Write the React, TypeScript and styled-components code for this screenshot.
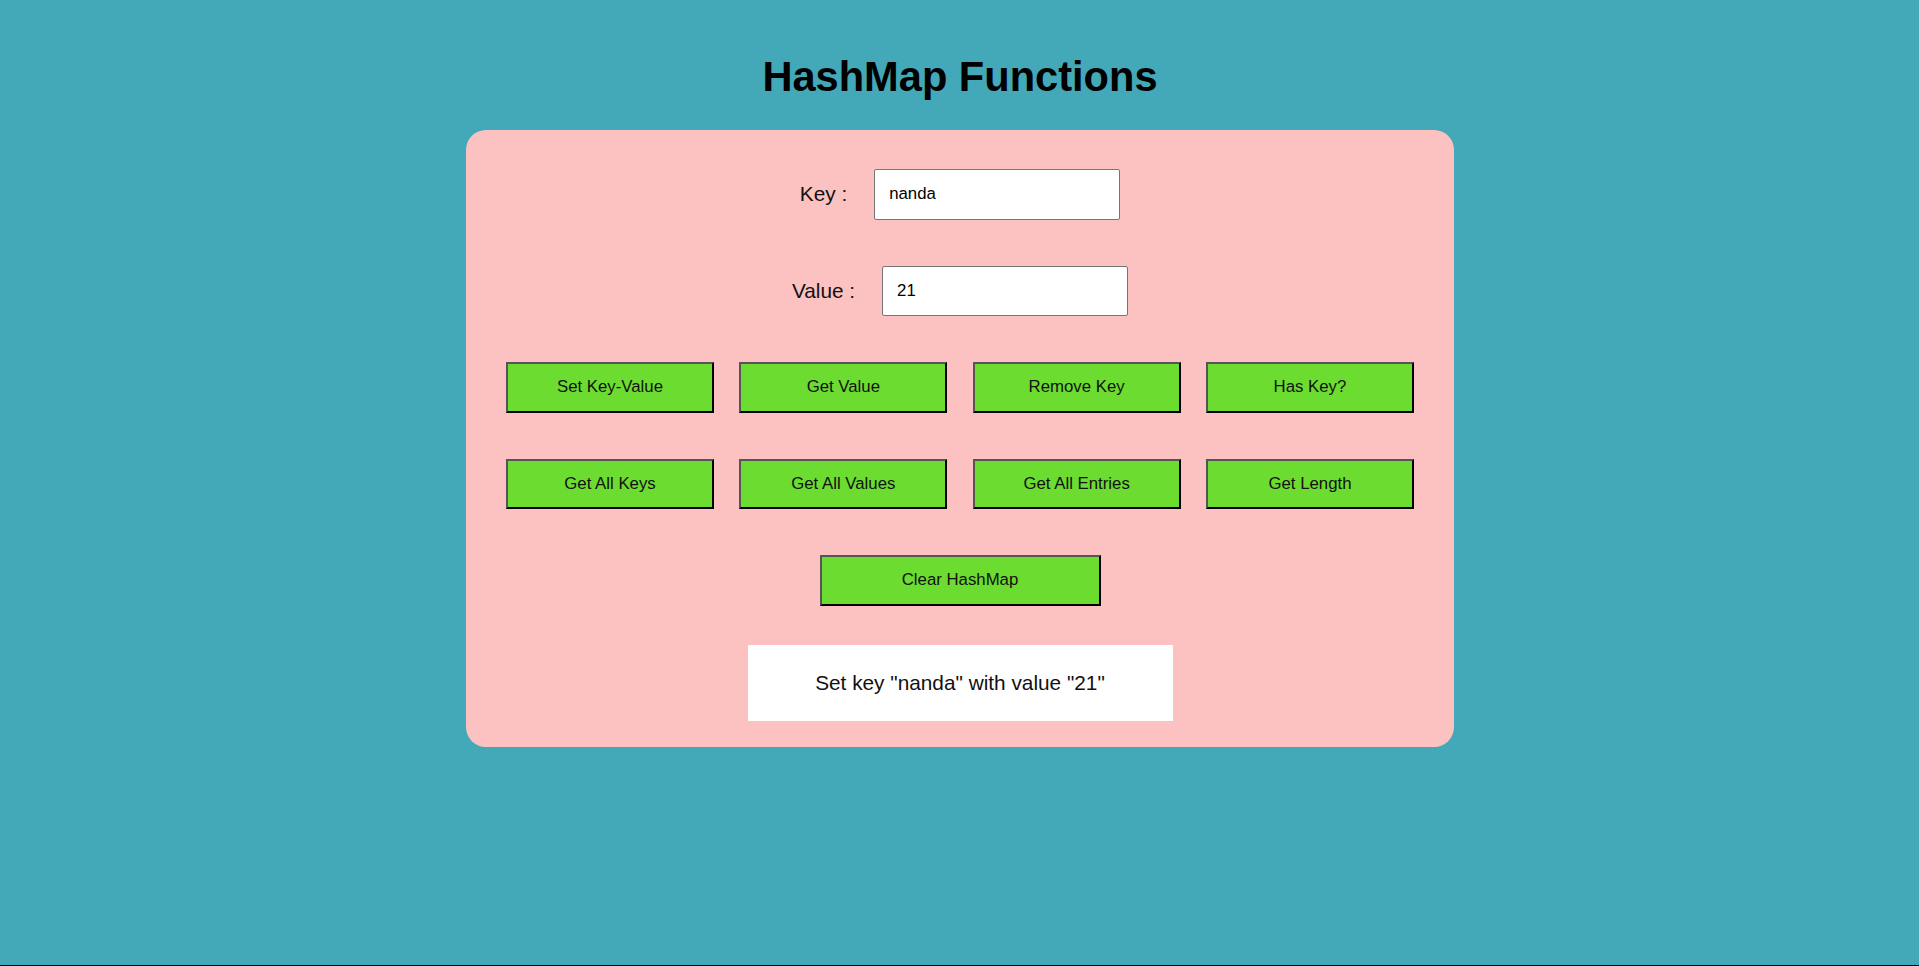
import React, { useState } from "react"
import styled, { createGlobalStyle } from "styled-components"

const GlobalStyle = createGlobalStyle`
  html {
    background: #000;
  }
  body {
    margin: 0;
    min-height: calc(100vh - 1px);
    background: #43a8b7;
    font-family: "Liberation Sans", Arial, sans-serif;
  }
`

const Page = styled.main`
  display: flex;
  flex-direction: column;
  align-items: center;
  padding-top: 53px;
  padding-left: 1px;
`

const Title = styled.h1`
  margin: 0 0 29px;
  font-size: 41.6px;
  font-weight: 700;
  color: #000;
`

const Card = styled.section`
  box-sizing: border-box;
  width: 988px;
  padding: 39px 40px 26px;
  background: #fcc2c2;
  border-radius: 20px;
  display: flex;
  flex-direction: column;
  align-items: center;
`

const Field = styled.div`
  display: flex;
  align-items: center;
  gap: 27px;
  margin-bottom: 46px;
`

const Label = styled.label`
  font-size: 20.8px;
  color: #111;
`

const Input = styled.input`
  box-sizing: border-box;
  width: 246px;
  height: 50.5px;
  padding: 0 14px;
  border: 1px solid #767676;
  border-radius: 2px;
  background: #fff;
  font-family: "Liberation Sans", Arial, sans-serif;
  font-size: 16.8px;
  color: #000;
  outline: none;
`

const ButtonGrid = styled.div`
  width: 100%;
  display: grid;
  grid-template-columns: repeat(4, 208px);
  justify-content: space-between;
  row-gap: 46px;
  margin-bottom: 46px;
`

const ActionButton = styled.button<{ $wide?: boolean }>`
  box-sizing: border-box;
  width: ${(p) => (p.$wide ? "281px" : "208px")};
  height: 50.5px;
  padding: 0;
  background: #6cdc30;
  border: 2px solid;
  border-color: #555 #000 #000 #555;
  font-family: "Liberation Sans", Arial, sans-serif;
  font-size: 16.8px;
  color: #111;
  cursor: pointer;
`

const Output = styled.div`
  box-sizing: border-box;
  width: 425px;
  height: 76px;
  margin-top: 39px;
  background: #fff;
  display: flex;
  align-items: center;
  justify-content: center;
  font-size: 20.8px;
  color: #111;
`

const actions = [
  "Set Key-Value",
  "Get Value",
  "Remove Key",
  "Has Key?",
  "Get All Keys",
  "Get All Values",
  "Get All Entries",
  "Get Length",
]

const App = () => {
  const [key, setKey] = useState("nanda")
  const [value, setValue] = useState("21")

  return (
    <>
      <GlobalStyle />
      <Page>
        <Title>HashMap Functions</Title>
        <Card>
          <Field>
            <Label htmlFor="key">Key :</Label>
            <Input id="key" value={key} onChange={(e) => setKey(e.target.value)} />
          </Field>
          <Field>
            <Label htmlFor="value">Value :</Label>
            <Input id="value" value={value} onChange={(e) => setValue(e.target.value)} />
          </Field>
          <ButtonGrid>
            {actions.map((a) => (
              <ActionButton key={a}>{a}</ActionButton>
            ))}
          </ButtonGrid>
          <ActionButton $wide>Clear HashMap</ActionButton>
          <Output>Set key "nanda" with value "21"</Output>
        </Card>
      </Page>
    </>
  )
}

export default App
